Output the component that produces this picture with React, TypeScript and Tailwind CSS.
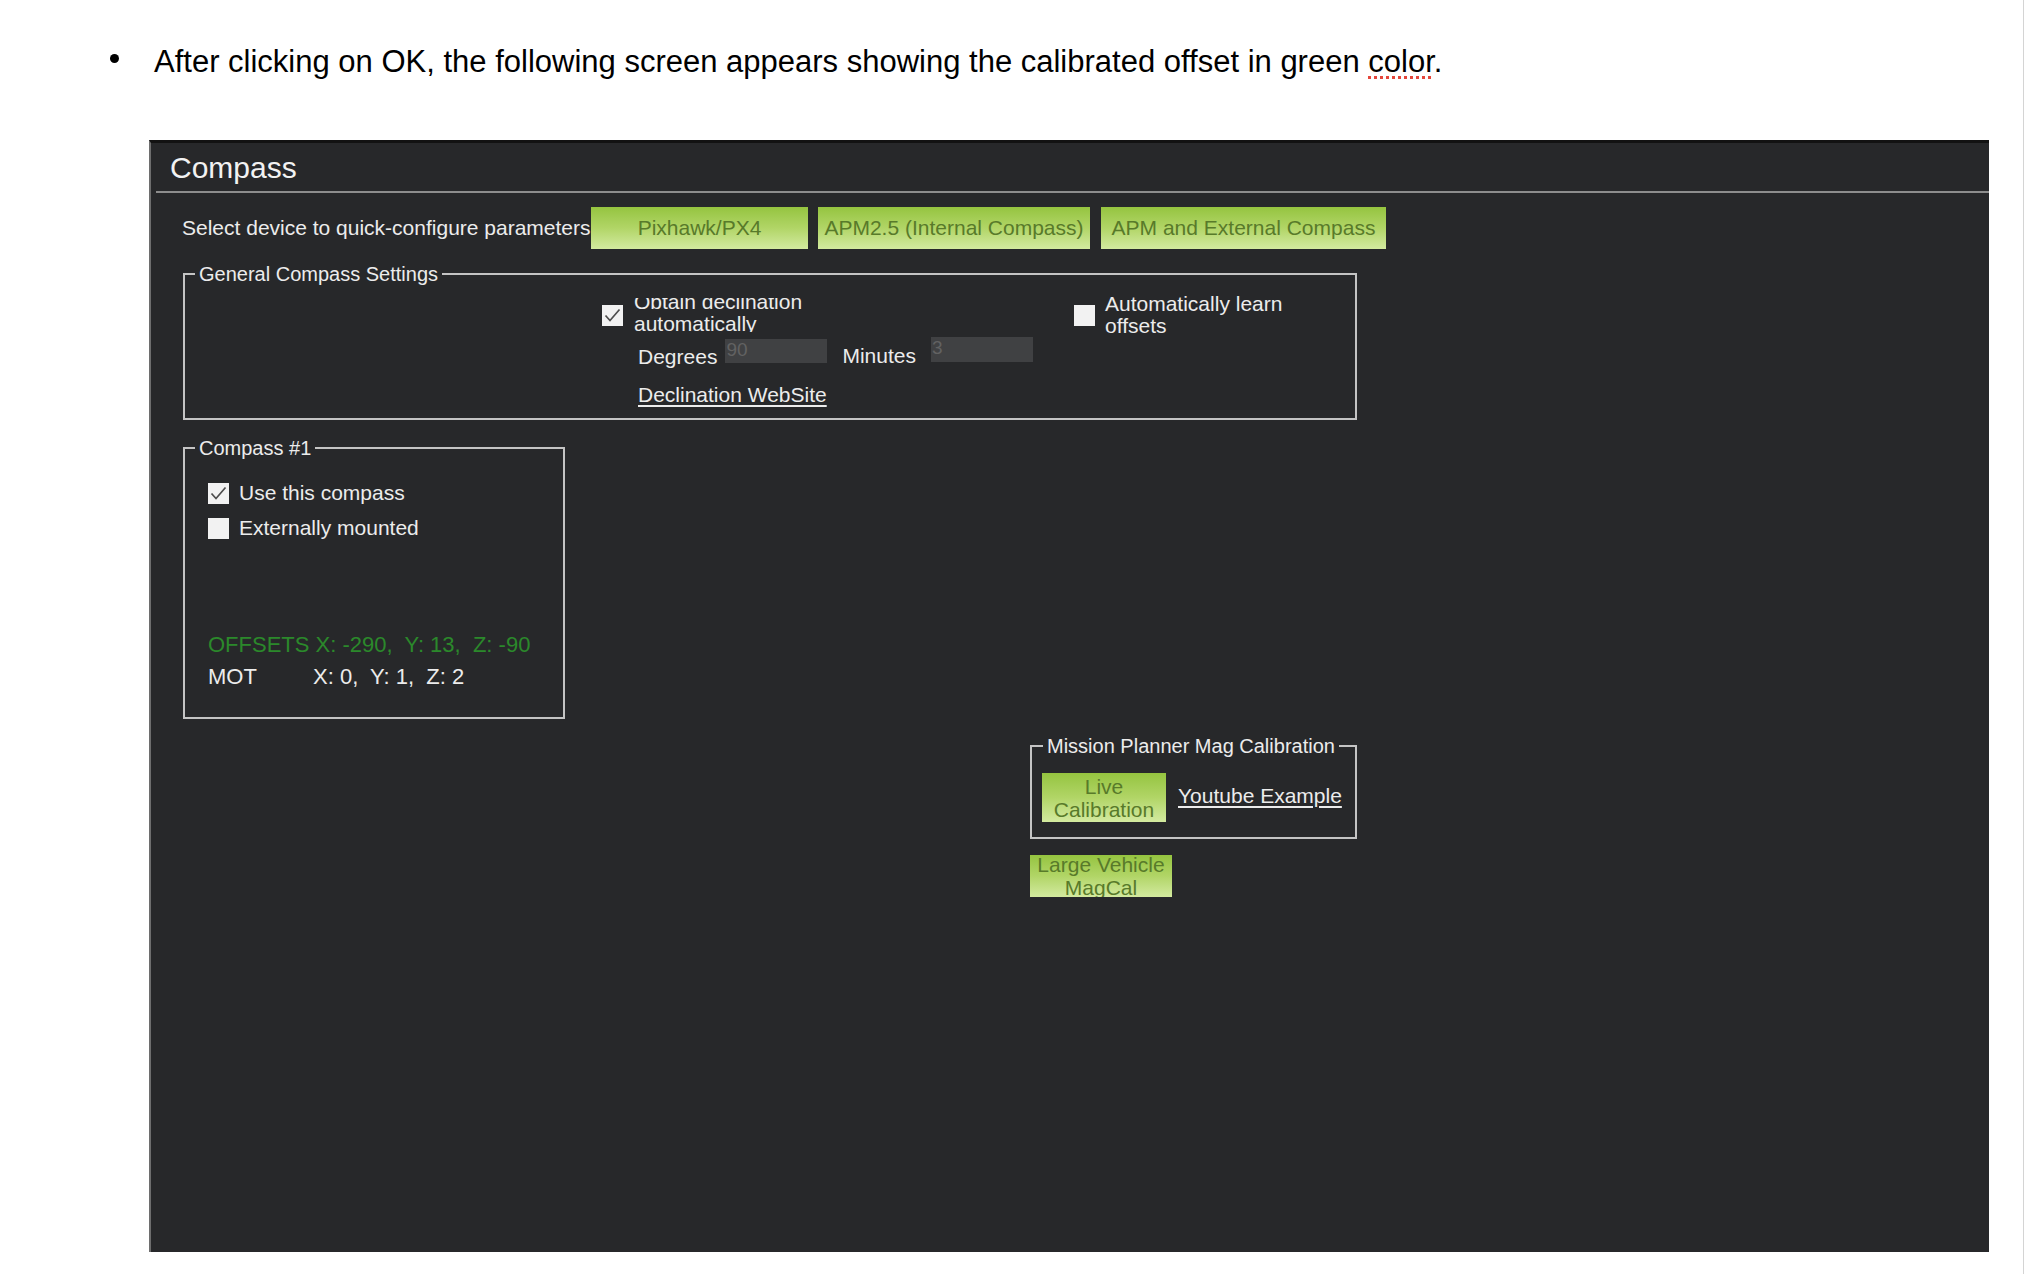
import React from "react";

function Check({ checked = false, className = "" }: { checked?: boolean; className?: string }) {
  return (
    <div className={`w-[21px] h-[21px] bg-[#f2f2f2] shrink-0 flex items-center justify-center ${className}`}>
      {checked && (
        <svg width="21" height="21" viewBox="0 0 21 21">
          <polyline points="3.5,10.5 8,15.5 17.5,4.5" fill="none" stroke="#4d4d4d" strokeWidth="1.7" />
        </svg>
      )}
    </div>
  );
}

function GreenButton({ className = "", children }: { className?: string; children: React.ReactNode }) {
  return (
    <div
      className={`shrink-0 flex items-center justify-center text-center overflow-hidden bg-linear-to-b from-[#95c43f] via-[#b1d566] to-[#d3ea9f] text-[#587a2a] text-[21px] ${className}`}
    >
      <div>{children}</div>
    </div>
  );
}

export default function App() {
  return (
    <div className="flex min-h-[1274px] w-full bg-white font-['Liberation_Sans',Arial,sans-serif]">
      <div className="flex-1 flex flex-col pt-[44px]">
        <div className="flex items-start h-[36px]">
          <div className="ml-[110px] mt-[10px] w-[9px] h-[9px] rounded-full bg-black shrink-0" />
          <p className="ml-[35px] text-[31px] leading-[36px] text-black whitespace-nowrap">
            After clicking on OK, the following screen appears showing the calibrated offset in green{" "}
            <span className="underline decoration-dotted decoration-[#e5463b] decoration-[3px] underline-offset-[4px]">
              color
            </span>
            .
          </p>
        </div>

        <div className="ml-[149px] mt-[60px] w-[1840px] h-[1112px] bg-[#27282a] border-t-[3px] border-t-[#121212] border-l-2 border-l-[#6e6e6e] flex flex-col text-[#ececec]">
          <div className="ml-[19px] mt-[10px] h-[30px] text-[30px] leading-[30px] text-[#f2f2f2]">Compass</div>
          <div className="ml-[5px] mt-[8px] h-[2px] bg-[#8d8d8d]" />

          <div className="mt-[14px] flex items-start h-[42px] pl-[31px]">
            <div className="w-[409px] overflow-hidden whitespace-nowrap mt-[10px] text-[21px] leading-[22px]">
              Select device to quick-configure parameters
            </div>
            <GreenButton className="w-[217px] h-[42px]">Pixhawk/PX4</GreenButton>
            <GreenButton className="ml-[10px] w-[272px] h-[42px]">APM2.5 (Internal Compass)</GreenButton>
            <GreenButton className="ml-[11px] w-[285px] h-[42px]">APM and External Compass</GreenButton>
          </div>

          <fieldset className="ml-[32px] mt-[14px] w-[1174px] h-[157px] border-2 border-[#c4c4c4]">
            <legend className="ml-[10px] px-[4px] text-[20px] leading-[22px]">General Compass Settings</legend>
            <div className="flex items-start">
              <div className="ml-[417px] w-[472px] flex flex-col">
                <div className="flex items-start">
                  <Check checked className="mt-[20px]" />
                  <div className="ml-[11px] mt-[13px] h-[34px] overflow-hidden text-[21px] leading-[22px]">
                    <div className="mt-[-7px]">
                      Obtain declination
                      <br />
                      automatically
                    </div>
                  </div>
                </div>
                <div className="mt-[5px] flex items-start">
                  <span className="ml-[36px] mt-[9px] text-[21px] leading-[22px]">Degrees</span>
                  <div className="ml-[8px] mt-[2px] w-[102px] h-[24px] bg-[#404143] text-[#626262] text-[19px] leading-[20px] pl-[1px] pt-[1px]">
                    90
                  </div>
                  <span className="ml-[15px] mt-[8px] text-[21px] leading-[22px]">Minutes</span>
                  <div className="ml-[15px] w-[102px] h-[25px] bg-[#404143] text-[#626262] text-[19px] leading-[20px] pl-[1px] pt-[1px]">
                    3
                  </div>
                </div>
                <a className="self-start ml-[36px] mt-[16px] text-[21px] leading-[22px] underline underline-offset-[3px]">
                  Declination WebSite
                </a>
              </div>
              <div className="flex items-start">
                <Check className="mt-[20px]" />
                <div className="ml-[10px] mt-[8px] text-[21px] leading-[22px]">
                  Automatically learn
                  <br />
                  offsets
                </div>
              </div>
            </div>
          </fieldset>

          <fieldset className="ml-[32px] mt-[17px] w-[382px] h-[282px] border-2 border-[#c4c4c4]">
            <legend className="ml-[10px] px-[4px] text-[20px] leading-[22px]">Compass #1</legend>
            <div className="flex flex-col pl-[23px]">
              <div className="mt-[23px] flex items-center h-[22px]">
                <Check checked />
                <span className="ml-[10px] text-[21px] leading-[22px]">Use this compass</span>
              </div>
              <div className="mt-[13px] flex items-center h-[22px]">
                <Check />
                <span className="ml-[10px] text-[21px] leading-[22px]">Externally mounted</span>
              </div>
              <div className="mt-[95px] text-[22px] leading-[22px] text-[#2b892b] whitespace-pre">
                OFFSETS X: -290,  Y: 13,  Z: -90
              </div>
              <div className="mt-[10px] flex text-[22px] leading-[22px] whitespace-pre">
                <span className="w-[105px]">MOT</span>
                <span>X: 0,  Y: 1,  Z: 2</span>
              </div>
            </div>
          </fieldset>

          <fieldset className="ml-[879px] mt-[16px] w-[327px] h-[104px] border-2 border-[#c4c4c4]">
            <legend className="ml-[11px] px-[4px] text-[20px] leading-[22px]">Mission Planner Mag Calibration</legend>
            <div className="flex items-start">
              <GreenButton className="ml-[10px] mt-[16px] w-[124px] h-[49px] leading-[23px]">
                Live
                <br />
                Calibration
              </GreenButton>
              <a className="ml-[12px] mt-[28px] text-[21px] leading-[22px] underline underline-offset-[3px] whitespace-nowrap">
                Youtube Example
              </a>
            </div>
          </fieldset>

          <GreenButton className="ml-[879px] mt-[16px] w-[142px] h-[42px] leading-[23px]">
            Large Vehicle
            <br />
            MagCal
          </GreenButton>
        </div>
      </div>
      <div className="w-px bg-[#d4d4d4]" />
      <div className="w-[2px]" />
    </div>
  );
}
